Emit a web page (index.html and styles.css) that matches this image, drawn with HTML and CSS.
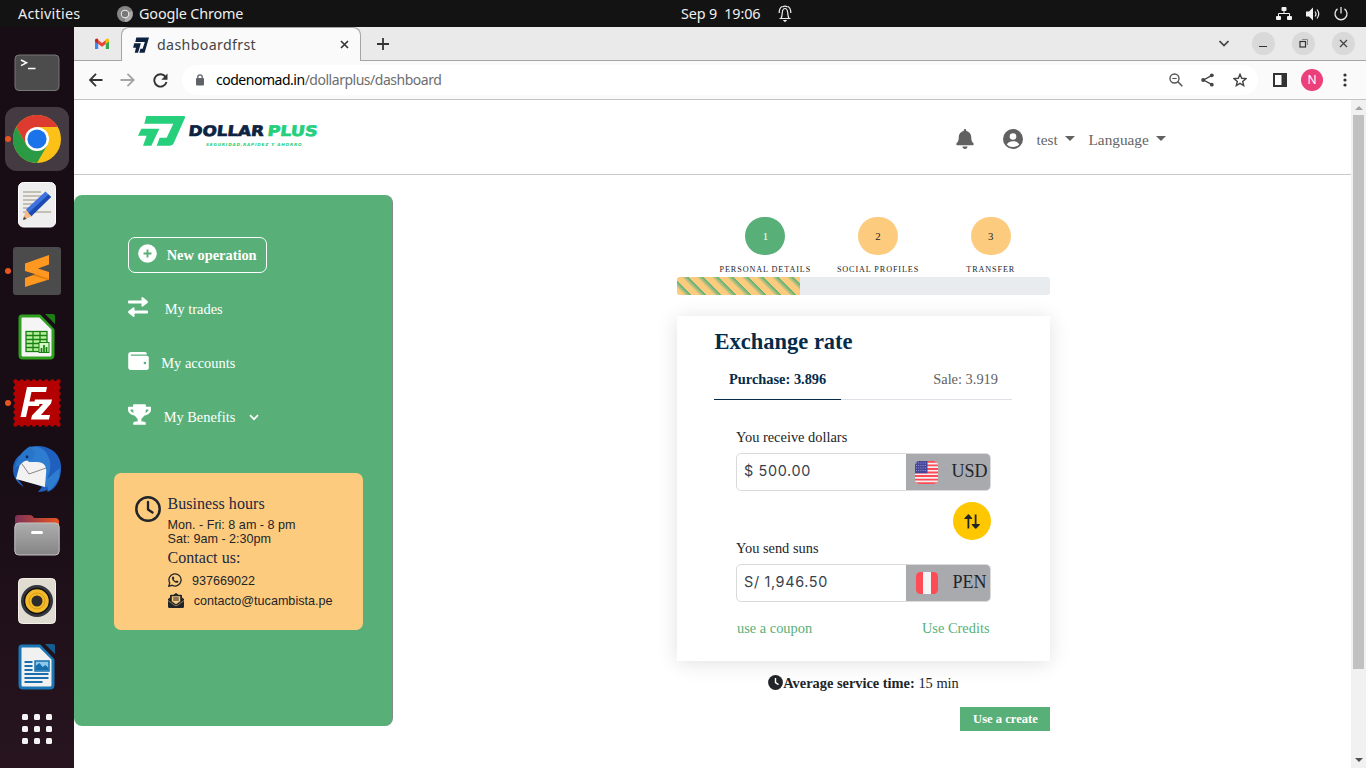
FILE: index.html
```html
<!DOCTYPE html>
<html lang="en">
<head>
<meta charset="utf-8">
<title>dashboardfrst</title>
<link rel="stylesheet" href="styles.css">
</head>
<body>
<div class="desktop">
  <header class="topbar">
    <span class="activities">Activities</span>
    <svg class="top-chrome" width="16" height="16" viewBox="0 0 16 16"><circle cx="8" cy="8" r="8" fill="#858585"/><path d="M8 8 15 5A8 8 0 0 1 8 16Z" fill="#aaa"/><circle cx="8" cy="8" r="4.2" fill="#eee"/><circle cx="8" cy="8" r="3.2" fill="#777"/></svg>
    <span class="top-app">Google Chrome</span>
    <span class="top-clock">Sep 9&nbsp; 19:06</span>
    <svg class="top-bell" width="14" height="18" viewBox="0 0 14 18" fill="none" stroke="#eee" stroke-width="1.200"><path d="M1.500 13.500h11M3 13.500c1.200-2 1-4 1.300-6C4.600 4.800 5.500 3.500 7 3.500s2.400 1.300 2.700 4c.3 2 .1 4 1.300 6M1.200 8C1.200 4.500 2.500 2.300 4.200 1.500M12.800 8c0-3.500-1.300-5.700-3-6.500M4.500 1.900C6 1 8 1 9.500 1.900"/><path d="M4.800 15h4.400L7 17.200z" fill="#eee" stroke="none"/></svg>
    <div class="tray">
      <svg width="16" height="14" viewBox="0 0 16 14" fill="#f2f2f2"><rect x="5.500" y="0" width="5" height="4" rx="1"/><rect x="0" y="9" width="5" height="4" rx="1"/><rect x="11" y="9" width="5" height="4" rx="1"/><path d="M8 3v4M2.500 10V6.500h11V10" fill="none" stroke="#f2f2f2"/></svg>
      <svg width="15" height="14" viewBox="0 0 15 14"><path d="M0 4.500h3L7 .5v13L3 9.500H0z" fill="#f2f2f2"/><path d="M9 4.500q2 2.500 0 5M11 2.500q3.500 4.500 0 9" fill="none" stroke="#f2f2f2" stroke-width="1.200"/></svg>
      <svg width="14" height="14" viewBox="0 0 14 14" fill="none" stroke="#e8e8e8" stroke-width="1.300"><path d="M7 0v6.500M3.500 1.900a6 6 0 1 0 7 0"/></svg>
    </div>
  </header>

  <aside class="dock">
    <div class="dock-item"><svg width="46" height="38" viewBox="0 0 46 38"><rect x="1" y="1" width="44" height="35.500" rx="4" fill="#4c4c4c" stroke="#777"/><path d="M7 6l5.500 2.800L7 11.600M14 14.500h7.500" fill="none" stroke="#fff" stroke-width="1.500"/></svg></div>
    <div class="dock-item running"><div class="dock-active"><svg width="48" height="48" viewBox="0 0 48 48"><circle cx="24" cy="24" r="24" fill="#fbc116"/><path d="M3.200 12A24 24 0 0 1 44.800 12H24L13.600 30Z" fill="#dd3b2f"/><path d="M3.200 12A24 24 0 0 0 24 48L34.400 30 24 36 13.600 30Z" fill="#2a9a45"/><circle cx="24" cy="24" r="12" fill="#fff"/><circle cx="24" cy="24" r="9.600" fill="#1a73e8"/></svg></div></div>
    <div class="dock-item"><svg width="38" height="46" viewBox="0 0 38 46"><rect x=".5" y=".5" width="37" height="44.500" rx="5" fill="#eee" stroke="#fff"/><path d="M5 10h18M5 14h20M5 18h16M5 22h12M5 26h8M5 30h28" stroke="#c3bfb2" stroke-width="1.800"/><path d="M5 38l3-11 7 7z" fill="#f3b98a"/><path d="M5 38l1-3.500L8.500 37z" fill="#444"/><path d="M8 27.500L27.500 9.500l5.500 5.500-19.500 19z" fill="#3d72e0"/><path d="M10.500 31L30.500 12.500l2.500 2.500-19.500 19z" fill="#1b4ab0"/></svg></div>
    <div class="dock-item running"><svg width="48" height="48" viewBox="0 0 48 48"><rect width="48" height="48" rx="3" fill="#4b4b4b"/><path d="M12 16.500 36 8v9.500L25 21.500l11 3.500v7.500L12 40v-9l10.500-3.700L12 24z" fill="#ff9820"/><path d="M22.500 27.300L36 32l-1 1-15-4.800z" fill="#e07b0c"/></svg></div>
    <div class="dock-item"><svg width="38" height="46" viewBox="0 0 38 46"><path d="M4 2h18l13 13v26q0 3-3 3H5q-3 0-3-3V4q0-2 2-2z" fill="#f5f5f5" stroke="#30a020" stroke-width="3"/><path d="M22 0h6l10 10v7z" fill="#190d15"/><path d="M27 0h8q2 0 2 2v8z" fill="#1d7d14"/><g fill="#b9f0a0" stroke="#17800f" stroke-width="1.300"><rect x="8" y="17.500" width="21" height="20"/><path d="M8 21.500h21M8 25.500h21M8 29.500h21M8 33.500h21M15 17.500v20M22 17.500v20"/></g><rect x="21" y="28.500" width="10" height="10" fill="#d5f8c8" stroke="#17800f"/><path d="M23.500 38v-4M26 38v-7M28.500 38v-5" stroke="#17800f" stroke-width="1.700"/></svg></div>
    <div class="dock-item running"><svg width="48" height="48" viewBox="0 0 48 48"><rect x="2" y="2" width="44" height="44" fill="#b30000"/><path d="M2.500 2.500h43v43h-43z" fill="none" stroke="#b30000" stroke-width="4.500" stroke-linecap="round" stroke-dasharray="0 6.140"/><path d="M14 8h20l-1 5H18.500l-2 9.500H27l-1 4.500H15.500L13 38H7.500zM22 20.500h17l-1 4-10 11.500h9l-1 4.500H18l1-4 11-11.500h-9z" fill="#fff"/></svg></div>
    <div class="dock-item"><svg width="48" height="48" viewBox="0 0 48 48"><path d="M12 7C17 0 29-1 37 4c8 4 12 12 11 22-1 11-7 20-14 21l3-4c-4 3-8 4-12 4l4-5C22 39 9 35 4 33l7 9C4 38 0 32 0 24 0 17 4 11 9 9z" fill="#1f5fbd"/><path d="M8 15h24l3 9-3 18L3 34z" fill="#f2f2f2"/><path d="M9 19l7 10 17-6" stroke="#888" fill="none"/><path d="M14 3c9-4 17 0 20 6 4 7 5 15 0 25 5-4 10-9 13-11l-1 10c-4 8-9 13-12 13 2-3 1-5-2-4l1-13c1-7-1-12-9-12l-8 0-4-4z" fill="#2f7dd0"/><path d="M2 24c1-9 5-17 16-23 0 3 6 6 3 11-2 4-6 3-9 4-3 1-3 3-5 4-2 0-4 2-5 4z" fill="#2776c9"/><circle cx="14" cy="12" r="1.400" fill="#092a66"/></svg></div>
    <div class="dock-item"><svg width="46" height="42" viewBox="0 0 46 42"><defs><linearGradient id="tab"><stop offset="0" stop-color="#7d3157"/><stop offset="1" stop-color="#e95420"/></linearGradient><linearGradient id="box" x2="0" y2="1"><stop offset="0" stop-color="#adadad"/><stop offset="1" stop-color="#858585"/></linearGradient></defs><path d="M1 12V4q0-3 3-3h12q2 0 3 1.500L20 4h21q4 0 4 4v8H1z" fill="url(#tab)"/><rect x=".8" y="9" width="44.400" height="32" rx="4" fill="url(#box)" stroke="#c4c4c4"/><rect x="17" y="17" width="12" height="3" rx="1.500" fill="#fff"/></svg></div>
    <div class="dock-item"><svg width="38" height="46" viewBox="0 0 38 46"><rect x=".5" y=".5" width="37" height="45" rx="4" fill="#e0dcd1" stroke="#f3f0e8"/><circle cx="19" cy="23" r="16" fill="#33363e"/><circle cx="19" cy="23" r="12.500" fill="#f3bb2c" stroke="#111" stroke-width="1.500"/><circle cx="19" cy="23" r="8" fill="none" stroke="#d99c10"/><circle cx="19" cy="23" r="5.500" fill="#2c2c2c"/></svg></div>
    <div class="dock-item"><svg width="38" height="46" viewBox="0 0 38 46"><path d="M4 2h18l13 13v26q0 3-3 3H5q-3 0-3-3V4q0-2 2-2z" fill="#f1f1f1" stroke="#1b76b5" stroke-width="3"/><path d="M22 0h6l10 10v7z" fill="#22121b"/><path d="M27 0h8q2 0 2 2v8z" fill="#145d92"/><path d="M6.500 18h8M6.500 22h8M6.500 26h8M6.500 30h24M6.500 34h24M6.500 38h18" stroke="#1670ad" stroke-width="2"/><rect x="17" y="17" width="14" height="10" fill="#8cc7ec" stroke="#1670ad" stroke-width="1.500"/><path d="M17.500 26v-4l4-3 3 4 3-2 3 3v2z" fill="#1670ad"/></svg></div>
    <div class="dock-item apps"><svg width="30" height="30" viewBox="0 0 30 30" fill="#f4f4f4"><rect width="6" height="6" rx="1.500"/><rect x="12" width="6" height="6" rx="1.500"/><rect x="24" width="6" height="6" rx="1.500"/><rect y="12" width="6" height="6" rx="1.500"/><rect x="12" y="12" width="6" height="6" rx="1.500"/><rect x="24" y="12" width="6" height="6" rx="1.500"/><rect y="24" width="6" height="6" rx="1.500"/><rect x="12" y="24" width="6" height="6" rx="1.500"/><rect x="24" y="24" width="6" height="6" rx="1.500"/></svg></div>
  </aside>

  <main class="browser">
    <div class="tabstrip">
      <div class="pinned"><svg width="14" height="11" viewBox="0 0 14 11"><path d="M0 1.500V11h3.200V5z" fill="#4285f4"/><path d="M14 1.500V11h-3.200V5z" fill="#34a853"/><path d="M3.200 2v4L7 8.800 10.800 6V2L7 5z" fill="#ea4335"/><path d="M0 2Q.5-.5 3.200 1v5L0 3.500z" fill="#c5221f"/><path d="M14 2q-.5-2.500-3.200-1v5L14 3.500z" fill="#fbbc04"/></svg></div>
      <div class="tab">
        <svg width="16" height="16" viewBox="22 30 146 96" preserveAspectRatio="none" fill="#0e2240"><path d="M52 33H168L128 125H80L89 100H110L130 60H43ZM33 68H94L68 125H38L49 95H23Z"/></svg>
        <span class="tab-title">dashboardfrst</span>
        <svg class="tab-close" width="9" height="9" viewBox="0 0 9 9"><path d="M1 1l7 7M8 1L1 8" stroke="#333" stroke-width="1.600"/></svg>
      </div>
      <svg class="new-tab" width="12" height="12" viewBox="0 0 12 12"><path d="M6 0v12M0 6h12" stroke="#333" stroke-width="1.800"/></svg>
      <div class="window-buttons">
        <svg class="chevron" width="10" height="7" viewBox="0 0 10 7"><path d="M.5 1l4.500 4.500L9.500 1" fill="none" stroke="#444" stroke-width="1.700"/></svg>
        <span class="round"><svg width="8" height="10" viewBox="0 0 8 10"><path d="M0 7.500h8" stroke="#333"/></svg></span>
        <span class="round"><svg width="9" height="9" viewBox="0 0 9 9" fill="none" stroke="#333"><rect x="1" y="2.500" width="5.500" height="5.500" stroke-width="1.200"/><path d="M3 .5h5.500V6" stroke="#888"/></svg></span>
        <span class="round"><svg width="9" height="9" viewBox="0 0 9 9"><path d="M1 1l7 7M8 1L1 8" stroke="#444" stroke-width="1.300"/></svg></span>
      </div>
    </div>
    <div class="toolbar">
      <div class="nav-buttons">
        <svg width="15" height="14" viewBox="0 0 15 14" fill="none" stroke="#333" stroke-width="1.800"><path d="M14.500 7H2M8 .8L2 7l6 6.200"/></svg>
        <svg width="15" height="14" viewBox="0 0 15 14" fill="none" stroke="#a3a3a3" stroke-width="1.800"><path d="M.5 7h13M7.500 .8L13.700 7l-6.200 6.200"/></svg>
        <svg width="15" height="15" viewBox="0 0 15 15"><path d="M12.700 4A6.200 6.200 0 1 0 13.500 9" fill="none" stroke="#333" stroke-width="1.900"/><path d="M14.500 .5v6.200H8.300z" fill="#333"/></svg>
      </div>
      <div class="omnibox">
        <svg width="8" height="12" viewBox="0 0 8 12"><rect y="4" width="8" height="7.500" rx="1" fill="#5f6368"/><path d="M1.800 5V3a2.200 2.200 0 0 1 4.400 0v2" fill="none" stroke="#5f6368" stroke-width="1.300"/></svg>
        <span class="url"><b>codenomad.in</b>/dollarplus/dashboard</span>
        <div class="omni-actions">
          <svg width="14" height="14" viewBox="0 0 14 14" fill="none" stroke="#555" stroke-width="1.400"><circle cx="5.500" cy="5.500" r="4.500"/><path d="M3.300 5.500h4.400" stroke-width="1.100"/><path d="M8.800 8.800l4.500 4.500" stroke-width="1.600"/></svg>
          <svg width="13" height="14" viewBox="0 0 13 14" fill="#444"><path d="M11 2.300L2.500 7 11 11.700" fill="none" stroke="#444" stroke-width="1.400"/><circle cx="10.800" cy="2.300" r="1.900"/><circle cx="2.200" cy="7" r="2"/><circle cx="10.800" cy="11.700" r="1.900"/></svg>
          <svg width="14" height="14" viewBox="0 0 14 14"><path d="M7 1.300l1.700 4 4.300.3-3.300 2.800 1 4.200L7 10.400l-3.700 2.200 1-4.200L1 5.600l4.300-.3z" fill="none" stroke="#444" stroke-width="1.400"/></svg>
        </div>
      </div>
      <svg class="side-panel" width="14" height="14" viewBox="0 0 14 14"><path d="M0 0h14v14H0z" fill="#333"/><path d="M2 2h6.500v10H2z" fill="#fff"/></svg>
      <span class="avatar">N</span>
      <svg class="menu" width="4" height="14" viewBox="0 0 4 14" fill="#333"><circle cx="2" cy="2" r="1.600"/><circle cx="2" cy="7" r="1.600"/><circle cx="2" cy="12" r="1.600"/></svg>
    </div>

    <div class="viewport">
      <div class="page">
        <div class="site-header">
          <svg class="logo" width="182" height="34" viewBox="137 114 182 34">
            <g transform="translate(130 105) scale(.33333)" fill="#25cf7c"><path d="M49 33H162Q167 33 165 38L131 115Q128 122 120 122H80L89 98H110L130 56H43ZM34 71H88L64 122H39L50 92H24Z"/></g>
            <g font-family="DejaVu Sans" font-weight="700"><g transform="translate(0 136) skewX(-7)"><text x="188" y="0" font-size="14.500" textLength="75.500" lengthAdjust="spacingAndGlyphs" fill="#0d2342" stroke="#0d2342" stroke-width=".7">DOLLAR</text><text x="267" y="0" font-size="14.500" textLength="50" lengthAdjust="spacingAndGlyphs" fill="#25cf7c" stroke="#25cf7c" stroke-width=".7">PLUS</text></g><text x="206" y="145.500" font-size="4.200" font-style="italic" textLength="95.500" fill="#25cf7c">SEGURIDAD,RAPIDEZ Y AHORRO</text></g>
          </svg>
          <div class="account">
            <svg class="bell" width="18" height="20" viewBox="0 0 448 512" fill="#616161"><path d="M224 512c35.300 0 64-28.700 64-64H160c0 35.300 28.600 64 64 64zm215.400-149.700c-19.300-20.800-55.500-52-55.500-154.300 0-77.700-54.500-139.900-127.900-155.200V32a32 32 0 1 0-64 0v20.800C118.600 68.100 64.100 130.300 64.100 208c0 102.300-36.200 133.500-55.500 154.300A31.200 31.200 0 0 0 0 384c.1 16.400 13 32 32.100 32h383.800c19.100 0 32-15.600 32.100-32a31.200 31.200 0 0 0-8.600-21.700z"/></svg>
            <svg class="user" width="20" height="20" viewBox="0 0 20 20"><circle cx="10" cy="10" r="10" fill="#616161"/><circle cx="10" cy="7.500" r="3.300" fill="#fff"/><path d="M3.800 15.500c1.200-2.600 3.600-3.300 6.200-3.300s5 .7 6.200 3.300A8.300 8.300 0 0 1 10 18a8.300 8.300 0 0 1-6.200-2.500z" fill="#fff"/></svg>
            <span class="menu-link user-link">test</span><i class="caret"></i>
            <span class="menu-link lang-link">Language</span><i class="caret"></i>
          </div>
        </div>
        <div class="content">
          <nav class="sidebar">
            <div class="nav-row"><div class="new-op"><svg width="19" height="19" viewBox="0 0 19 19"><circle cx="9.500" cy="9.500" r="9.300" fill="#fff"/><path d="M9.500 5.500v8M5.500 9.500h8" stroke="#58b078" stroke-width="1.900"/></svg><span>New operation</span></div></div>
            <div class="nav-row trades"><svg width="20" height="20" viewBox="0 0 20 20" fill="#fff"><path d="M0 4.500q0-1 1-1h12.500V1q.1-1.400 1.400-.7l4.600 3.800q.9.900 0 1.800l-4.600 3.500q-1.300.8-1.400-.7V6.400H1q-1 0-1-1zM20 15.500q0 1-1 1H6.500V19q-.1 1.400-1.400.7L.5 15.900q-.9-.9 0-1.800l4.600-3.500q1.300-.8 1.400.7v2.300H19q1 0 1 1z"/></svg><span>My trades</span></div>
            <div class="nav-row accounts"><svg width="21" height="18" viewBox="0 0 512 448"><path d="M461 96H80a16 16 0 0 1 0-32h368c9 0 16-7 16-16 0-27-22-48-48-48H64C29 0 0 29 0 64v320c0 35 29 64 64 64h397c28 0 51-22 51-48V144c0-26-23-48-51-48z" fill="#fff"/><circle cx="416" cy="272" r="32" fill="#58b078"/></svg><span>My accounts</span></div>
            <div class="nav-row benefits"><svg width="23" height="21" viewBox="0 0 576 512"><path fill="#fff" d="M552 64H448V24c0-13.300-10.700-24-24-24H152c-13.300 0-24 10.700-24 24v40H24C10.700 64 0 74.700 0 88v56c0 35.700 22.500 72.400 61.900 100.700 31.500 22.700 69.800 37.100 110 41.700C203.300 338.500 240 360 240 360v72h-48c-35.300 0-64 20.700-64 56v12c0 6.600 5.400 12 12 12h296c6.600 0 12-5.400 12-12v-12c0-35.300-28.700-56-64-56h-48v-72s36.700-21.500 68.100-73.600c40.300-4.600 78.600-19 110-41.700 39.300-28.300 61.900-65 61.900-100.700V88c0-13.300-10.700-24-24-24zM99.300 192.800C74.900 175.200 64 155.600 64 144v-16h64.200c1 32.600 5.800 61.200 12.800 86.200-15.100-5.200-29.200-12.400-41.700-21.400zM512 144c0 16.100-17.700 36.100-35.300 48.800-12.500 9-26.700 16.200-41.800 21.400 7-25 11.800-53.600 12.800-86.200H512v16z"/></svg><span>My Benefits</span><svg class="more" width="10" height="7" viewBox="0 0 10 7"><path d="M1 1.200l4 4 4-4" fill="none" stroke="#fff" stroke-width="1.700"/></svg></div>
            <div class="hours">
              <svg class="clock" width="26" height="26" viewBox="0 0 26 26" fill="none" stroke="#212529"><circle cx="13" cy="13" r="11.700" stroke-width="2.500"/><path d="M13 6v7.500l4.500 3" stroke-width="2.300" stroke-linecap="round" stroke-linejoin="round"/></svg>
              <div class="hours-body">
                <h2>Business hours</h2>
                <p>Mon. - Fri: 8 am - 8 pm<br>Sat: 9am - 2:30pm</p>
                <h2>Contact us:</h2>
                <div class="contact"><svg width="14" height="14" viewBox="0 0 14 14"><path d="M.8 13.200l.9-3.300a6.100 6.100 0 1 1 2.400 2.400z" fill="none" stroke="#212529" stroke-width="1.300"/><path d="M4.200 4q.6-.9 1.300-.4l.8 1.700-.6.900q.8 1.400 2.200 2l.8-.8 1.700.8q.3.800-.6 1.400-1.300.7-3.300-.6Q4 7 4 5.500z" fill="#212529"/></svg><span>937669022</span></div>
                <div class="contact mail"><svg width="16" height="15" viewBox="0 0 16 15"><path d="M0 6l2-1.500V2.800q0-1 1-1h2.500L8 0l2.500 1.800H13q1 0 1 1v1.700L16 6v7.500q0 1.500-1.500 1.500h-13Q0 15 0 13.500z" fill="#212529"/><path d="M3.800 3.300h8.400v5L8 11.200 3.800 8.300z" fill="#fdcb7e"/><path d="M5.200 5h5.600M5.200 7h5.600" stroke="#212529"/><path d="M0 7.500l6.500 4.700q1.500 1 3 0L16 7.500" fill="none" stroke="#fdcb7e" stroke-width=".5"/></svg><span>contacto@tucambista.pe</span></div>
              </div>
            </div>
          </nav>

          <section class="exchange">
            <div class="steps">
              <div class="step current"><span class="dot">1</span><span class="step-label">PERSONAL DETAILS</span></div>
              <div class="step"><span class="dot">2</span><span class="step-label">SOCIAL PROFILES</span></div>
              <div class="step"><span class="dot">3</span><span class="step-label">TRANSFER</span></div>
            </div>
            <div class="progress"><div class="progress-bar" style="width:33%"></div></div>
            <div class="card">
              <h1>Exchange rate</h1>
              <div class="rates"><div class="rate active">Purchase: 3.896</div><div class="rate">Sale: 3.919</div></div>
              <div class="form">
                <label>You receive dollars</label>
                <div class="field"><div class="amount">$ 500.00</div><div class="currency"><svg width="23" height="23" viewBox="0 0 23 23"><defs><clipPath id="flag"><rect width="23" height="23" rx="4.500"/></clipPath></defs><g clip-path="url(#flag)"><path fill="#f2f0f2" d="M0 0h23v23H0z"/><path d="M0 .9h23M0 4.400h23M0 8h23M0 11.500h23M0 15h23M0 18.600h23M0 22.100h23" stroke="#ff4b55" stroke-width="1.800"/><path d="M0 0h12.500v12.300H0z" fill="#46479a"/><path d="M1 2h11M1 4.500h11M1 7h11M1 9.500h11" stroke="#a5a6dc" stroke-width=".8" stroke-dasharray="1 1.200"/></g></svg><span>USD</span></div></div>
                <div class="swap"><svg width="16" height="15" viewBox="0 0 16 15" fill="#212529"><path d="M3.500 14.500V5H.8Q-.1 4.800.6 4L3.900.4q.6-.5 1.200 0L8 4q.5.800-.4 1H5.300v9.500zM10.700 .5V10H8.200q-.9.200-.3 1l3.200 3.600q.6.500 1.200 0L15.700 11q.5-.8-.4-1h-2.800V.5z"/></svg></div>
                <label>You send suns</label>
                <div class="field"><div class="amount">S/ 1,946.50</div><div class="currency pen"><svg width="22" height="22" viewBox="0 0 22 22"><rect width="22" height="22" rx="4.500" fill="#ff4b55"/><path d="M7 0h8v22H7z" fill="#f5f5f5"/></svg><span>PEN</span></div></div>
                <div class="links"><span>use a coupon</span><span>Use Credits</span></div>
              </div>
            </div>
            <div class="service"><svg width="15" height="15" viewBox="0 0 15 15"><circle cx="7.500" cy="7.500" r="7.400" fill="#212529"/><path d="M7.500 3v4.700l3 2" fill="none" stroke="#fff" stroke-width="1.400"/></svg><b>Average service time:</b>&nbsp;15 min</div>
            <div class="create">Use a create</div>
          </section>
        </div>
      </div>
      <div class="scrollbar"><i class="up"></i><div class="thumb"></div><i class="down"></i></div>
    </div>
  </main>
</div>
</body>
</html>
```
FILE: styles.css
```css
* { box-sizing: border-box; }
body { margin: 0; overflow: hidden; font-family: "Liberation Serif", serif; color: #212529; }
svg { display: block; flex: none; }
.desktop { display: grid; width: 1366px; height: 768px; grid-template: 27px 741px / 74px 1292px; }

.topbar { grid-column: 1 / 3; display: flex; align-items: center; background: #131313; color: #eee; font: 14.4px/27px "Noto Sans", sans-serif; white-space: nowrap; }
.activities { width: 99px; padding-left: 18px; margin-right: 18px; letter-spacing: .25px; }
.top-app { width: 542px; margin-left: 6px; letter-spacing: -.15px; }
.top-clock { width: 97px; letter-spacing: -.15px; }
.tray { display: flex; align-items: center; gap: 14px; margin: 0 18px 0 auto; }
.tray svg:first-child { margin-right: 0; }
.tray svg:nth-child(2) { margin-right: -1px; }

.dock { display: flex; flex-direction: column; align-items: center; padding-top: 13px; background: linear-gradient(#190d15 60%, #27141f); }
.dock-item { display: flex; position: relative; width: 74px; height: 66px; align-items: center; justify-content: center; }
.dock-active { display: flex; width: 64px; height: 64px; align-items: center; justify-content: center; border-radius: 12px; background: #443b42; }
.running::before { content: ""; position: absolute; left: 5px; top: 30px; width: 6px; height: 6px; border-radius: 50%; background: #e95420; }
.apps { height: 58px; }

.browser { display: grid; grid-template-rows: 34px 39px 668px; background: #fff; }
.tabstrip { display: flex; align-items: center; background: #eaeaea; border-bottom: 1px solid #a5a5a5; }
.pinned { display: flex; width: 47px; padding-left: 21px; }
.tab { display: flex; align-items: center; align-self: flex-start; width: 240px; height: 34px; padding: 0 11px 0 11px; background: #fafafa; border: 1px solid #a5a5a5; border-bottom: 0; border-radius: 8px 8px 0 0; }
.tab-title { margin-left: 8px; font: 14.2px/30px "Noto Sans", sans-serif; color: #444; letter-spacing: .35px; }
.tab-close { margin-left: auto; }
.new-tab { margin-left: 16px; }
.window-buttons { display: flex; align-items: center; gap: 17px; margin: 0 11.500px 0 auto; }
.chevron { margin-right: 6px; }
.round { display: flex; width: 23px; height: 23px; align-items: center; justify-content: center; border-radius: 50%; background: #d9d9d9; }
.toolbar { display: flex; align-items: center; background: #fafafa; border-bottom: 1px solid #c3c3c3; }
.nav-buttons { display: flex; align-items: center; gap: 17px; width: 95px; margin-left: 14px; }
.nav-buttons svg:last-child { margin-left: .500px; }
.omnibox { display: flex; align-items: center; width: 1076px; height: 30px; margin-left: -1px; padding: 0 12px 0 14px; border-radius: 15px; background: #fff; }
.url { margin-left: 12px; font: 14px/30px "Noto Sans", sans-serif; color: #6e6e6e; letter-spacing: -.48px; }
.url b { font-weight: 400; color: #000; }
.omni-actions { display: flex; gap: 18.500px; margin-left: auto; margin-right: -.500px; }
.side-panel { margin-left: 15px; }
.avatar { width: 22px; height: 22px; margin-left: 14px; border-radius: 50%; background: #ec407a; color: #fff; font: 12px/22px "Noto Sans", sans-serif; text-align: center; }
.menu { margin-left: 19.500px; }

.viewport { display: grid; grid-template-columns: 1277px 15px; }
.page { display: flex; flex-direction: column; }
.site-header { display: flex; height: 75px; padding: 14px 0 0 63px; border-bottom: 1px solid #c8c8c8; }
.account { display: flex; align-items: center; height: 24px; margin: 13px 0 0 637px; color: #666; font-size: 15.3px; }
.user { margin-left: 28.500px; }
.menu-link { padding-top: 2px; line-height: 20px; }
.user-link { width: 21px; margin-left: 14px; }
.caret { margin: -2px 0 0 7.500px; border: 5px solid transparent; border-top-color: #616161; border-bottom: 0; }
.lang-link { width: 60px; margin-left: 13.500px; }

.content { display: flex; padding-top: 20px; }
.sidebar { width: 319px; height: 531px; padding: 33px 29px 0 40px; border-right: 1px solid #7f8c82; border-radius: 8px; background: #58b078; color: #fff; font-size: 14.400px; }
.nav-row { display: flex; height: 54px; padding-left: 14px; align-items: center; }
.new-op { display: flex; width: 139px; height: 36px; padding-left: 9px; align-items: center; border: 1px solid #fff; border-radius: 7px; font-weight: 700; }
.new-op svg { margin: -4px 9.700px 0 0; }
.new-op span { font-size: 14.400px; }
.trades svg { margin: -4px 16.700px 0 0; }
.accounts svg { margin: -5px 12.300px 0 0; }
.benefits svg { margin: -5px 12.700px 0 0; }
.benefits .more { margin: 1px 0 0 14px; }
.hours { display: flex; height: 157px; margin-top: 29px; padding: 22px 0 0 21px; border-radius: 7px; background: #fdcb7e; color: #212529; }
.clock { margin: 1px 6.500px 0 0; }
.hours h2 { margin: 0; font: 16px/18px "Liberation Serif", serif; color: #1c2740; letter-spacing: .05px; }
.hours p { margin: 5px 0 3px; font: 12.600px/14px "Liberation Sans", sans-serif; }
.contact { display: flex; height: 20px; align-items: center; gap: 10.500px; margin: 4px 0 0; font: 12.600px/18px "Liberation Sans", sans-serif; }
.contact svg { margin-top: -2px; }
.mail { height: 20px; margin-top: 0; gap: 10.200px; }

.exchange { display: flex; flex-direction: column; width: 373px; margin: 22px 0 0 284px; }
.steps { display: grid; grid-template-columns: repeat(3, 112.700px); height: 60px; padding-left: 32px; }
.step { display: flex; flex-direction: column; align-items: center; }
.dot { width: 40px; height: 38px; border-radius: 20px; background: #fdcb7e; font-size: 10.800px; line-height: 39px; text-align: center; }
.current .dot { background: #58b078; color: #fff; }
.step-label { margin-top: 9px; font-size: 8.200px; line-height: 11px; letter-spacing: .88px; white-space: nowrap; }
.progress { height: 18px; border-radius: 3px; background: #e9ecef; overflow: hidden; }
.progress-bar { height: 18px; background: repeating-linear-gradient(45deg, #fdcb7e 0, #fdcb7e 5px, #6cb47a 9.300px, #6cb47a 10.300px, #fdcb7e 10.600px); }
.card { height: 345px; margin-top: 21px; padding: 12px 38px 0 37px; background: #fff; box-shadow: 0 2px 20px rgba(0, 0, 0, .12); }
.card h1 { margin: 0 0 11px; padding-left: .500px; font: 700 22.500px/27px "Liberation Serif", serif; color: #042c4a; }
.rates { display: flex; justify-content: space-between; height: 34px; border-bottom: 1px solid #dee2e6; font-size: 14.400px; line-height: 26px; }
.rate { padding-right: 14px; color: #616161; }
.rate.active { height: 34px; padding: 0 15px; border-bottom: 1px solid #042c4a; color: #042c4a; font-weight: 700; }
.form { display: flex; flex-direction: column; padding: 28px 21px 0 22px; }
.form label { font-size: 14.400px; line-height: 18px; color: #212529; }
.field { display: flex; height: 38px; margin-top: 7px; border: 1px solid #dadada; border-radius: 5px; overflow: hidden; }
.amount { flex: none; width: 169px; padding-left: 7px; font: 14.400px/33px Inter, sans-serif; letter-spacing: .65px; color: #38424c; }
.currency { display: flex; flex: 1; padding-left: 9px; align-items: center; background: #a9aaad; font-size: 18px; }
.currency span { margin: -2px 0 0 13.500px; }
.pen { padding-left: 10px; }
.pen span { margin-left: 14.500px; }
.swap { display: flex; width: 38px; height: 38px; align-items: center; justify-content: center; align-self: flex-end; margin: 11px 0 -1px; border-radius: 50%; background: #ffc700; }
.links { display: flex; justify-content: space-between; margin-top: 16px; padding: 0 1.500px 0 1px; font-size: 14.400px; line-height: 20px; color: #58b078; }
.service { display: flex; justify-content: center; align-items: center; height: 20px; margin-top: 12px; font-size: 14.400px; }
.service svg { margin-top: -1px; }
.create { align-self: flex-end; width: 90px; height: 24px; margin-top: 14px; padding-left: 1px; background: #58b078; color: #fff; font: 700 12.600px/24px "Liberation Serif", serif; text-align: center; }

.scrollbar { display: flex; flex-direction: column; align-items: center; background: #f1f1f1; }
.up { margin-top: 6px; border: 4px solid transparent; border-bottom-color: #a3a3a3; border-top: 0; }
.thumb { width: 11px; height: 554px; margin-top: 5px; background: #c1c1c1; }
.down { margin: auto 0 6px; border: 4px solid transparent; border-top-color: #505050; border-bottom: 0; }
```
